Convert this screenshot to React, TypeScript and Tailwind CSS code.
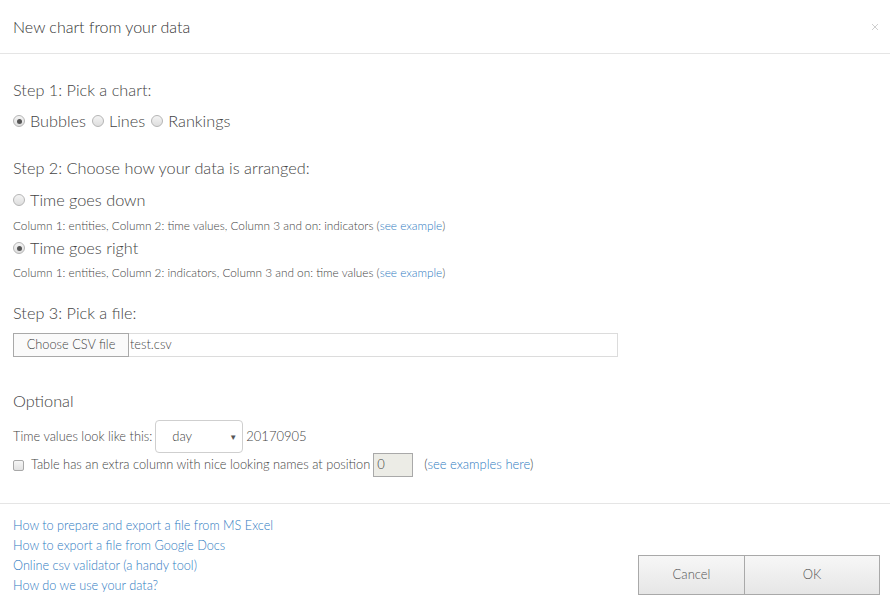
import React from 'react';

const Radio = ({ checked }: { checked?: boolean }) => (
  <span className="inline-flex w-[12px] h-[12px] rounded-full border border-[#b5b5b5] bg-gradient-to-b from-[#f4f4f4] to-[#dedede] items-center justify-center mr-[5px] shrink-0">
    {checked && <span className="w-[5px] h-[5px] rounded-full bg-[#555]" />}
  </span>
);

const Link = ({ children }: { children: React.ReactNode }) => (
  <a className="text-[#2f7bbf] cursor-pointer">{children}</a>
);

export default function App() {
  return (
    <div className="w-[890px] h-[604px] bg-white text-[#444] font-['Lato',sans-serif] font-light overflow-hidden">
      <div className="h-[54px] border-b border-[#e5e5e5] flex items-center justify-between pl-[13px] pr-[10px]">
        <h1 className="text-[16px] text-[#333] pt-[1px]">New chart from your data</h1>
        <svg width="8" height="8" viewBox="0 0 8 8" className="mr-[1px]">
          <path d="M1 1L7 7M7 1L1 7" stroke="#cfcfcf" strokeWidth="1" />
        </svg>
      </div>

      <div className="px-[13px]">
        <div className="h-[20px] mt-[26px] flex items-center text-[16.3px]">Step 1: Pick a chart:</div>
        <div className="h-[20px] mt-[11px] flex items-center text-[16.3px]">
          <Radio checked /> <span className="mr-[6px]">Bubbles</span>
          <Radio /> <span className="mr-[6px]">Lines</span>
          <Radio /> <span>Rankings</span>
        </div>

        <div className="h-[20px] mt-[27px] flex items-center text-[16.3px]">Step 2: Choose how your data is arranged:</div>
        <div className="h-[20px] mt-[12px] flex items-center text-[16.3px]">
          <Radio /> Time goes down
        </div>
        <div className="h-[16px] mt-[8px] flex items-center text-[11.8px]">
          Column 1: entities, Column 2: time values, Column 3 and on: indicators (<Link>see example</Link>)
        </div>
        <div className="h-[20px] mt-[4px] flex items-center text-[16.3px]">
          <Radio checked /> Time goes right
        </div>
        <div className="h-[16px] mt-[7px] flex items-center text-[11.8px]">
          Column 1: entities, Column 2: indicators, Column 3 and on: time values (<Link>see example</Link>)
        </div>

        <div className="h-[20px] mt-[22px] flex items-center text-[16.3px]">Step 3: Pick a file:</div>
        <div className="h-[24px] mt-[10px] flex items-stretch text-[12.8px]">
          <button className="w-[116px] border border-[#a9a9a9] bg-[#fafafa] text-[#444] font-light">Choose CSV file</button>
          <div className="w-[489px] border border-l-0 border-[#dcdcdc] flex items-center pl-[1px]">test.csv</div>
        </div>

        <div className="h-[20px] mt-[34px] flex items-center text-[16.3px]">Optional</div>
        <div className="h-[33px] mt-[9px] flex items-center text-[12.8px]">
          <span>Time values look like this:</span>
          <div className="ml-[3px] w-[88px] h-[33px] border border-[#cfcfcf] rounded-[4px] flex items-center justify-between pl-[16px] pr-[5px] text-[13px]">
            <span>day</span>
            <span className="text-[8px] text-[#555]">▼</span>
          </div>
          <span className="ml-[3px] text-[13px]">20170905</span>
        </div>
        <div className="h-[24px] flex items-center text-[12.8px]">
          <span className="w-[11px] h-[11px] rounded-[2px] border border-[#a8a8a8] bg-gradient-to-b from-[#f6f6f6] to-[#e2e2e2] mr-[7px]" />
          <span>Table has an extra column with nice looking names at position</span>
          <div className="ml-[3px] w-[40px] h-[24px] border border-[#a9a9a9] bg-[#ecece6] flex items-center pl-[3px] text-[13px]">0</div>
          <span className="ml-[11px] text-[13px]">(<Link>see examples here</Link>)</span>
        </div>
      </div>

      <div className="mt-[26px] border-t border-[#e5e5e5] flex justify-between items-end pl-[13px] pr-[10px]">
        <div className="pt-[11px] flex flex-col text-[12.7px] leading-[20px]">
          <Link>How to prepare and export a file from MS Excel</Link>
          <Link>How to export a file from Google Docs</Link>
          <Link>Online csv validator (a handy tool)</Link>
          <Link>How do we use your data?</Link>
        </div>
        <div className="flex text-[13px] text-[#555]">
          <button className="w-[107px] h-[40px] border border-[#a9a9a9] bg-gradient-to-b from-[#f7f7f7] to-[#e6e6e6] font-light">Cancel</button>
          <button className="w-[135px] h-[40px] border border-l-0 border-[#a9a9a9] bg-gradient-to-b from-[#f7f7f7] to-[#e6e6e6] font-light">OK</button>
        </div>
      </div>
    </div>
  );
}
